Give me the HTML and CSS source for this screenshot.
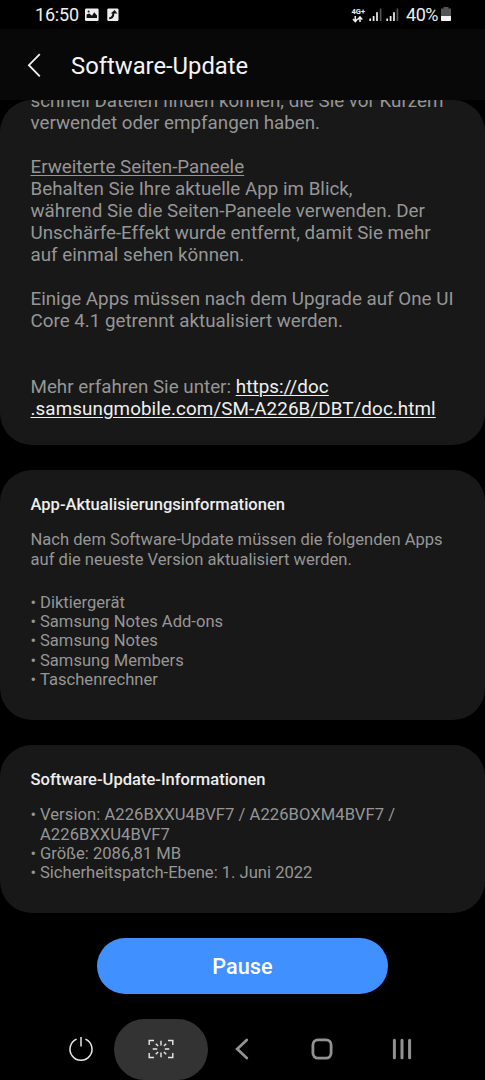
FILE: index.html
```html
<!DOCTYPE html>
<html lang="de">
<head>
<meta charset="utf-8">
<title>Software-Update</title>
<link rel="stylesheet" href="styles.css">
</head>
<body>
<div class="screen">
  <div class="status">
    <span class="clock">16:50</span>
    <svg class="status-left" width="36" height="16" viewBox="0 0 36 16">
      <rect x="0" y="1.5" width="13.6" height="12.5" rx="1.2" fill="#eee"/>
      <path d="M1.6 11V7.4l2.6-1 2.8 2.3 2.2-3.4 2.8 3.2V11z" fill="#111"/>
      <circle cx="3.6" cy="4.4" r="1" fill="#111"/>
      <rect x="22.3" y="1.5" width="11.2" height="12.5" rx="1.2" fill="#eee"/>
      <path d="M24.2 11.2c3 0 4.2-1.4 4.2-5.4" fill="none" stroke="#111" stroke-width="2"/>
      <path d="M25.8 6.6L29.6 3l2.8 3.6z" fill="#111"/>
    </svg>
    <div class="status-right">
      <div class="net"><span>4G+</span>
        <svg width="12" height="7" viewBox="0 0 12 7"><path d="M3.3 0v5M1 3l2.3 2.6L5.6 3M8 6V1.2M5.8 3.4L8 .9l2.3 2.5" fill="none" stroke="#eee" stroke-width="1.5"/></svg>
      </div>
      <svg class="bars" width="31" height="14" viewBox="0 0 31 14">
        <path d="M1.2 10.5V13M4.6 8V13M8 4.3V13M18.2 10.5V13M21.6 8V13M25 4.3V13" stroke="#eee" stroke-width="1.7"/>
        <path d="M11.6 0.5V13M28.4 0.5V13" stroke="#555" stroke-width="1.7"/>
      </svg>
      <span class="pct">40%</span>
      <svg class="battery" width="10" height="15" viewBox="0 0 10 15">
        <path d="M2.5 0h5v1.5H10V9H0V1.5h2.5z" fill="#555"/><path d="M0 9h10v4.3a.7.7 0 0 1-.7.7H.7a.7.7 0 0 1-.7-.7z" fill="#f5f5f5"/>
      </svg>
    </div>
  </div>
  <header class="header">
    <svg width="14" height="26" viewBox="0 0 14 26"><path d="M12.8 1.1L1.9 12.2l10.9 11.1" fill="none" stroke="#f2f2f2" stroke-width="1.8"/></svg>
    <h1>Software-Update</h1>
  </header>
  <main class="content">
    <section class="card notes">
      <p>schnell Dateien finden können, die Sie vor Kurzem<br>verwendet oder empfangen haben.</p>
      <p><u>Erweiterte Seiten-Paneele</u><br>Behalten Sie Ihre aktuelle App im Blick,<br>während Sie die Seiten-Paneele verwenden. Der<br>Unschärfe-Effekt wurde entfernt, damit Sie mehr<br>auf einmal sehen können.</p>
      <p>Einige Apps müssen nach dem Upgrade auf One UI<br>Core 4.1 getrennt aktualisiert werden.</p>
      <p class="more">Mehr erfahren Sie unter: <a>https://doc<br>.samsungmobile.com/SM-A226B/DBT/doc.html</a></p>
    </section>
    <section class="card apps">
      <h2>App-Aktualisierungsinformationen</h2>
      <p>Nach dem Software-Update müssen die folgenden Apps<br>auf die neueste Version aktualisiert werden.</p>
      <ul>
        <li>Diktiergerät</li><li>Samsung Notes Add-ons</li><li>Samsung Notes</li><li>Samsung Members</li><li>Taschenrechner</li>
      </ul>
    </section>
    <section class="card info">
      <h2>Software-Update-Informationen</h2>
      <ul>
        <li class="version">Version: A226BXXU4BVF7 / A226BOXM4BVF7 /<br>A226BXXU4BVF7</li><li>Größe: 2086,81 MB</li><li>Sicherheitspatch-Ebene: 1. Juni 2022</li>
      </ul>
    </section>
    <button class="pause">Pause</button>
  </main>
  <nav class="nav">
    <span class="item"><svg width="26" height="26" viewBox="0 0 26 26"><path d="M8.6 3.1a11 11 0 1 0 8.8 0M13 1v9.5" fill="none" stroke="#e8e8e8" stroke-width="1.5"/></svg></span>
    <span class="item active"><svg width="26" height="20" viewBox="0 0 26 20"><path d="M1.2 6V1.5H6M20 1.5h4.8V6M24.8 14v4.5H20M6 18.5H1.2V14M13 1.8v4.7M13 13.5v4.7M4.7 10h4.5M16.8 10h4.5M7.8 4.7l2.3 2.4M18.2 4.7l-2.3 2.4M7.8 15.3l2.3-2.4M18.2 15.3l-2.3-2.4" fill="none" stroke="#e8e8e8" stroke-width="1.4"/></svg></span>
    <span class="item"><svg width="14" height="22" viewBox="0 0 14 22"><path d="M11.8 2L2.2 11l9.6 9" fill="none" stroke="#929292" stroke-width="2.8" stroke-linecap="round"/></svg></span>
    <span class="item"><svg width="22" height="22" viewBox="0 0 22 22"><rect x="1.9" y="1.9" width="18.2" height="18.2" rx="5" fill="none" stroke="#929292" stroke-width="2.8"/></svg></span>
    <span class="item"><svg width="20" height="22" viewBox="0 0 20 22"><path d="M2.4 2.3v17.4M10 2.3v17.4M17.6 2.3v17.4" stroke="#929292" stroke-width="3" stroke-linecap="round"/></svg></span>
  </nav>
</div>
</body>
</html>
```
FILE: styles.css
```css
* { box-sizing: border-box; }
body { margin: 0; background: #000; font-family: Roboto, sans-serif; }
h1, h2, p, ul { margin: 0; padding: 0; font-weight: 400; }
.screen { width: 485px; height: 1080px; overflow: hidden; display: flex; flex-direction: column; background: #000; }
.status { height: 29px; display: flex; align-items: center; padding: 2px 34px 0 35px; color: #eee; }
.clock { font-size: 18px; line-height: 26px; letter-spacing: -0.2px; }
.status-left { margin-left: 6.5px; margin-top: -1px; }
.status-right { margin-left: auto; display: flex; align-items: center; }
.net { display: flex; flex-direction: column; align-items: center; font-size: 7.5px; line-height: 8px; font-weight: 700; }
.bars { margin-left: 4px; }
.pct { margin-left: 6px; font-size: 18px; line-height: 26px; letter-spacing: -0.5px; }
.battery { margin-left: 3px; margin-top: -1px; }
.header { height: 71px; display: flex; align-items: center; padding: 3px 0 0 27px; background: #080808; color: #f4f4f4; }
.header h1 { margin-left: 30px; font-size: 23.8px; line-height: 30px; }
.content { display: flex; flex-direction: column; align-items: center; }
.card { width: 485px; border-radius: 32px; background: #181818; color: #969696; padding-left: 30.5px; overflow: hidden; white-space: nowrap; }
.notes { height: 345px; font-size: 18.8px; line-height: 22px; }
.notes p { margin-bottom: 22px; }
.notes p:first-child { margin-top: -10px; }
.notes .more { margin-top: 44px; }
.notes a { color: #f0f0f0; letter-spacing: 0.1px; }
.notes u, .notes a { text-decoration: underline; text-decoration-thickness: 1px; text-underline-offset: 2px; }
.apps { height: 249.5px; margin-top: 25.5px; padding-top: 24.7px; }
.info { height: 168px; margin-top: 25px; padding-top: 25.3px; }
.card h2 { color: #eee; font-weight: 500; font-size: 16.55px; line-height: 19.25px; }
.apps, .info { font-size: 16.58px; line-height: 19.25px; }
.apps p { margin-top: 16.2px; }
.info ul { margin-top: 16.2px; }
.apps ul { margin-top: 24px; }
.card ul { list-style: none; }
.card li { padding-left: 9.5px; }
.card li::before { content: "•"; float: left; margin-left: -9.5px; font-size: 16.5px; }
.version { letter-spacing: 0.06px; }
.pause { width: 290.5px; height: 56px; margin-top: 25.4px; padding: 1px 0 0; border: 0; border-radius: 28px; background: #4090ff; color: #fff; font: 500 21.7px/28px Roboto, sans-serif; }
.nav { margin-top: 25.1px; height: 61px; display: flex; padding-left: 41px; }
.item { width: 80.3px; flex: none; display: flex; align-items: center; justify-content: center; padding-bottom: 2px; }
.active { width: 94px; margin: 0 -6.85px; background: #333; border-radius: 31px; }
```
